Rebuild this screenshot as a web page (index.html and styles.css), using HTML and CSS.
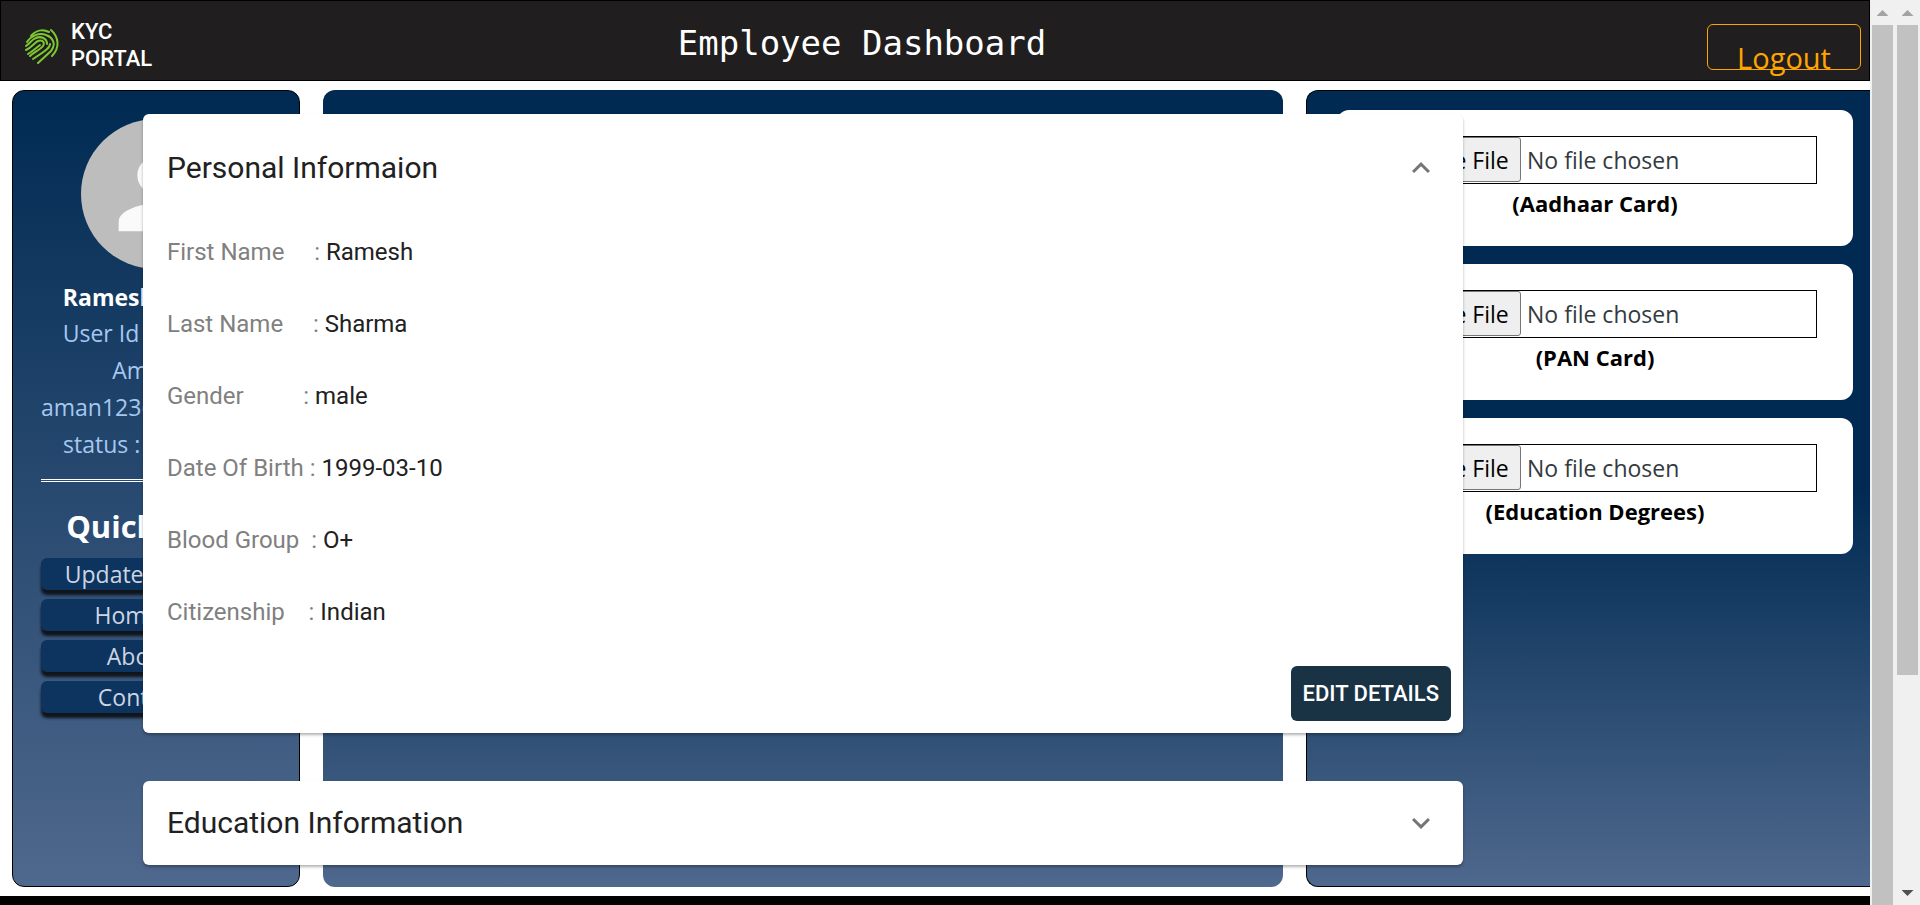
FILE: index.html
```html
<!DOCTYPE html>
<html lang="en">
<head>
<meta charset="utf-8">
<title>Employee Dashboard</title>
<link rel="stylesheet" href="styles.css">
</head>
<body>
<div class="page">
  <header class="topbar">
    <a class="logo" href="#" aria-label="KYC Portal">
      <svg class="logo-mark" viewBox="0 0 34 36" fill="none" stroke="#7dc832" stroke-width="2" stroke-linecap="round">
        <path d="M6 8C11 2 18 1 24 4"/>
        <path d="M26 2C34 9 35 20 27 28"/>
        <path d="M2 14C6 8 14 4 21 7C29 10 31 17 26 23L13 35"/>
        <path d="M1 18C4 16 6 13 9 11C15 7 22 10 22 16"/>
        <path d="M25 16C25 20 20 23 8 31"/>
        <path d="M1 22C6 20 9 15 13 13C18 11 20 15 18 18C15 22 9 24 5 28"/>
        <path d="M3 26C8 23 11 20 15 17"/>
      </svg>
      <span class="logo-text">KYC<br>PORTAL</span>
    </a>
    <h1 class="title">Employee Dashboard</h1>
    <button class="logout" type="button">Logout</button>
  </header>

  <main class="columns">
    <aside class="panel profile">
      <div class="avatar">
        <svg viewBox="0 0 24 24" fill="#fafafa"><path d="M12 12c2.21 0 4-1.79 4-4s-1.79-4-4-4-4 1.79-4 4 1.79 4 4 4zm0 2c-2.67 0-8 1.34-8 4v2h16v-2c0-2.66-5.33-4-8-4z"/></svg>
      </div>
      <h2 class="name">Ramesh Sharma</h2>
      <p class="meta">User Id : 1002345</p>
      <p class="meta">Amazon</p>
      <p class="meta">aman123@gmail.com</p>
      <p class="meta">status : approved</p>
      <hr class="rule">
      <h2 class="links-title">Quick Links</h2>
      <nav class="links">
        <a href="#">Update Accounts</a>
        <a href="#">Home Page</a>
        <a href="#">About Us</a>
        <a href="#">Contact Us</a>
      </nav>
    </aside>

    <section class="panel details">
      <div class="accordions">
        <article class="accordion open">
          <button class="summary" type="button" aria-expanded="true">
            <span>Personal Informaion</span>
            <svg class="chevron" viewBox="0 0 24 24" fill="#757575"><path d="M12 8l-6 6 1.41 1.41L12 10.83l4.59 4.58L18 14z"/></svg>
          </button>
          <dl class="fields">
            <div><dt>First Name     : </dt><dd>Ramesh</dd></div>
            <div><dt>Last Name     : </dt><dd>Sharma</dd></div>
            <div><dt>Gender          : </dt><dd>male</dd></div>
            <div><dt>Date Of Birth : </dt><dd>1999-03-10</dd></div>
            <div><dt>Blood Group  : </dt><dd>O+</dd></div>
            <div><dt>Citizenship    : </dt><dd>Indian</dd></div>
          </dl>
          <div class="actions"><button class="edit" type="button">EDIT DETAILS</button></div>
        </article>
        <article class="accordion">
          <button class="summary" type="button" aria-expanded="false">
            <span>Education Information</span>
            <svg class="chevron" viewBox="0 0 24 24" fill="#757575"><path d="M16.59 8.59L12 13.17 7.41 8.59 6 10l6 6 6-6z"/></svg>
          </button>
        </article>
      </div>
    </section>

    <section class="panel uploads">
      <div class="upload"><input type="file" id="aadhaar"><label for="aadhaar">(Aadhaar Card)</label></div>
      <div class="upload"><input type="file" id="pan"><label for="pan">(PAN Card)</label></div>
      <div class="upload"><input type="file" id="degrees"><label for="degrees">(Education Degrees)</label></div>
    </section>
  </main>
  <footer class="footer"></footer>
</div>

<div class="scrollbar">
  <span class="arrow up"></span>
  <div class="thumb"></div>
</div>
<div class="scrollbar">
  <span class="arrow up"></span>
  <div class="track"><div class="thumb partial"></div></div>
  <span class="arrow down"></span>
</div>
</body>
</html>
```

FILE: styles.css
```css
* { box-sizing: border-box; }

body {
  margin: 0;
  display: grid;
  grid-template-columns: minmax(0, 1fr) 25px 25px;
  height: 100vh;
  overflow: hidden;
  background: #fff;
  font-family: "Open Sans", sans-serif;
  font-size: 23px;
}

h1, h2, p, dl, dd { margin: 0; }

.page {
  display: flex;
  flex-direction: column;
  min-height: 100vh;
  overflow: hidden;
}

/* Header */
.topbar {
  flex: none;
  display: grid;
  grid-template-columns: 154px 1fr 316px;
  align-items: start;
  padding: 0 8px 0 24px;
  height: 81px;
  border: 1px solid #000;
  background: #211e1f;
}
.logo {
  display: flex;
  gap: 12px;
  padding-top: 17px;
  color: #fff;
  text-decoration: none;
}
.logo-mark { width: 34px; height: 36px; margin-top: 10px; }
.logo-text {
  font: 500 22px/27px Roboto, sans-serif;
}
.title {
  color: #fff;
  font: 400 34px/40px "DejaVu Sans Mono", monospace;
  text-align: center;
  padding-top: 22px;
}
.logout {
  justify-self: end;
  width: 154px;
  height: 46px;
  margin-top: 23px;
  padding: 22px 0 0;
  border: 1px solid orange;
  border-radius: 6px;
  background: none;
  color: orange;
  font: 29px/20px "Open Sans", sans-serif;
}

/* Columns */
.columns {
  flex: 1;
  display: grid;
  grid-template-columns: 288fr 960fr 564fr;
  gap: 23px;
  padding: 9px 0 9px 12px;
}
.panel {
  min-width: 0;
  border-radius: 12px;
  background: linear-gradient(#002a52 50%, #4f688d);
}
.footer { flex: none; height: 9px; background: #000; }

/* Profile */
.profile {
  display: flex;
  flex-direction: column;
  padding: 28px 28px 0;
  border: 1px solid #000;
  background: linear-gradient(#002a52, #4f688d);
  text-align: center;
}
.avatar {
  display: grid;
  place-items: center;
  align-self: center;
  width: 150px;
  height: 150px;
  margin-bottom: 10px;
  border-radius: 50%;
  background: #bdbdbd;
}
.avatar svg { width: 112px; height: 112px; }
.name { color: #fff; font-size: 23px; line-height: 36px; }
.meta { color: #a6c8f0; line-height: 37px; white-space: nowrap; }
.rule {
  width: 100%;
  margin: 16px 0 21px;
  border: 0;
  border-top: 3px double #fff;
}
.links-title { color: #fff; font-size: 31px; line-height: 46px; margin-bottom: 9px; }
.links { display: grid; gap: 9px; }
.links a {
  border-radius: 6px;
  background: #0d335f;
  box-shadow: 0 5px 3px #10151c;
  color: #ccd6e2;
  line-height: 32px;
  text-decoration: none;
  white-space: nowrap;
}

/* Accordions spread wider than their column */
.accordions {
  position: relative;
  z-index: 1;
  display: grid;
  gap: 48px;
  margin: 24px -180px 0;
}
.accordion {
  border-radius: 6px;
  background: #fff;
  box-shadow: 0 2px 3px rgba(0, 0, 0, .3);
  color: #212121;
  font-family: Roboto, sans-serif;
}
.summary {
  display: flex;
  align-items: center;
  justify-content: space-between;
  width: 100%;
  height: 84px;
  padding: 0 24px;
  border: 0;
  background: none;
  color: inherit;
  font: 30px/36px Roboto, sans-serif;
}
.open .summary { height: 108px; }
.chevron { width: 36px; height: 36px; }
.fields {
  display: grid;
  gap: 36px;
  padding: 12px 24px 36px;
  font-size: 24px;
  line-height: 36px;
}
.fields div { display: flex; white-space: pre; }
.fields dt { color: #808080; }
.actions { display: flex; justify-content: flex-end; padding: 0 12px 12px; }
.edit {
  height: 55px;
  padding: 0 12px;
  border: 0;
  border-radius: 6px;
  background: #1a3344;
  color: #fff;
  font: 500 22px/36px Roboto, sans-serif;
}

/* Uploads */
.uploads {
  display: flex;
  flex-direction: column;
  gap: 18px;
  padding: 19px 17px 19px 30px;
  border: 1px solid #000;
  border-right: 0;
  border-radius: 12px 0 0 12px;
}
.upload {
  height: 136px;
  padding: 26px 36px;
  border-radius: 12px;
  background: #fff;
  text-align: center;
}
.upload input {
  display: block;
  width: 100%;
  height: 48px;
  border: 1px solid #000;
  color: #333a40;
  font: 23px/44px "Open Sans", sans-serif;
}
.upload input::file-selector-button {
  width: 147px;
  height: 45px;
  margin: 0 6px 0 0;
  padding: 0 6px;
  border: 1px solid #767676;
  border-radius: 3px;
  background: #efefef;
  color: #000;
  font: 23px/40px "Open Sans", sans-serif;
}
.upload label {
  display: block;
  font-size: 22px;
  font-weight: 700;
  line-height: 38px;
}

/* Scrollbars */
.scrollbar {
  display: flex;
  flex-direction: column;
  align-items: center;
  height: 100vh;
  background: #f0f0f0;
}
.arrow {
  flex: none;
  width: 12px;
  height: 6px;
  margin: 10px 0 9px;
  background: #a3a3a3;
  clip-path: polygon(50% 0, 100% 100%, 0 100%);
}
.arrow.down {
  background: #505050;
  clip-path: polygon(0 0, 100% 0, 50% 100%);
}
.thumb { flex: 1; width: 21px; background: #c1c1c1; }
.track { flex: 1; }
.partial { height: 76%; }
```
